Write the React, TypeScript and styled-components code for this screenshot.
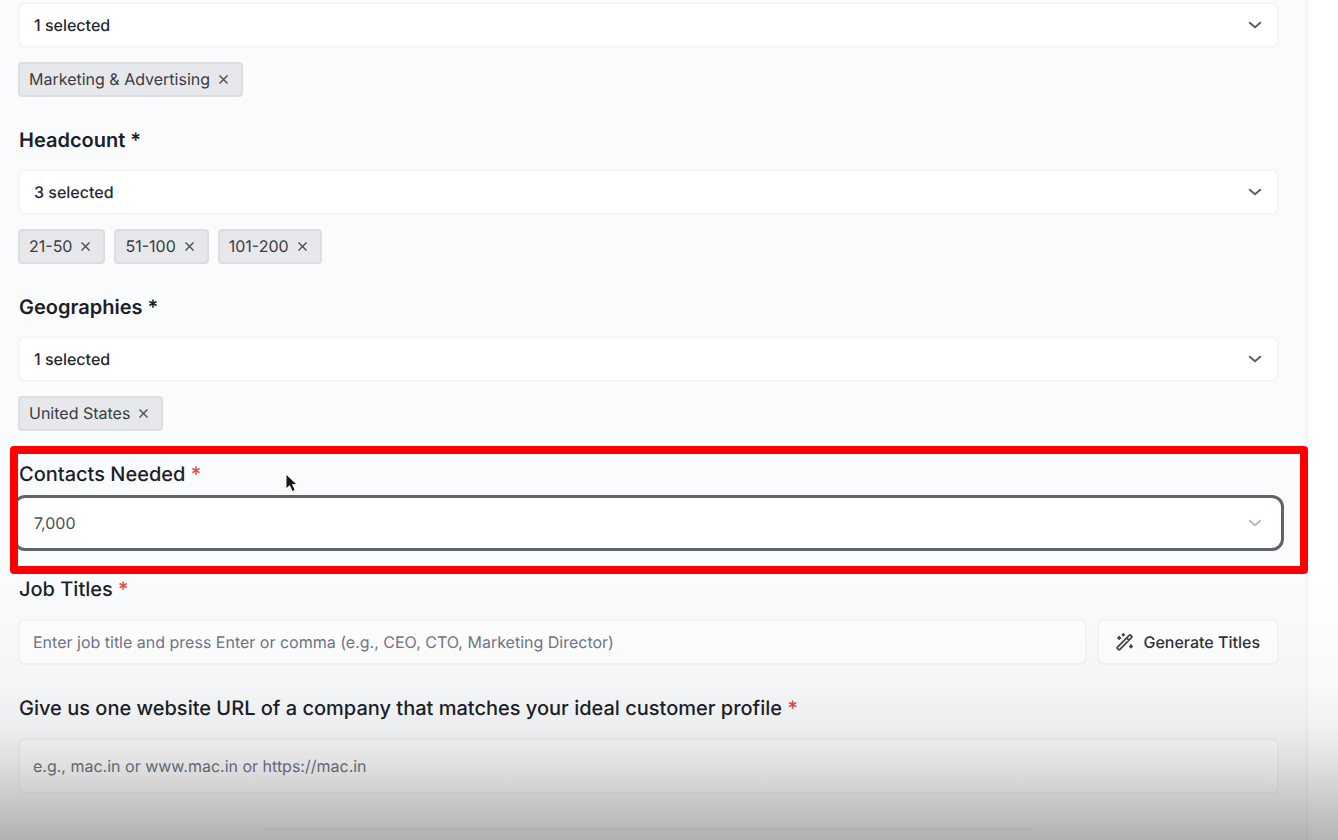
import React from "react";
import styled, { createGlobalStyle } from "styled-components";

const GlobalStyle = createGlobalStyle`
  *, *::before, *::after { box-sizing: border-box; }
  body {
    margin: 0;
    background: #ffffff;
    font-family: Inter, "Liberation Sans", sans-serif;
    text-rendering: geometricPrecision;
    color: #1b1f2a;
  }
  button, input, select { font: inherit; color: inherit; text-rendering: inherit; }
`;

const Page = styled.div`
  position: relative;
  min-height: 100vh;
  padding-right: 30px;
  display: flex;
  overflow: hidden;
`;

const Panel = styled.form`
  flex: 1;
  min-width: 0;
  padding: 2px 27px 0 18px;
  background: #fafbfd;
  border-right: 2px solid #f2f4f7;
  display: flex;
  flex-direction: column;
  gap: 29px;
`;

const Group = styled.section<{ $gap?: number }>`
  position: relative;
  display: flex;
  flex-direction: column;
  gap: ${(p) => p.$gap ?? 15}px;
`;

const Label = styled.label<{ $strong?: boolean }>`
  align-self: flex-start;
  padding-left: 1px;
  font-size: 20px;
  line-height: 28px;
  font-weight: ${(p) => (p.$strong ? 600 : 500)};
`;

const Required = styled.span`
  color: #ef4444;
`;

const Picker = styled.div`
  display: flex;
  flex-direction: column;
  gap: 14px;
`;

const SelectWrap = styled.div<{ $muted?: boolean }>`
  position: relative;
  color: ${(p) => (p.$muted ? "#4d4f55" : "#26282e")};
`;

const Select = styled.select<{ $focused?: boolean }>`
  display: block;
  width: 100%;
  height: 46px;
  padding: 0 48px 0 14px;
  appearance: none;
  background: #ffffff;
  border: 2px solid ${(p) => (p.$focused ? "#fcfdfe" : "#f3f5f8")};
  border-radius: 7px;
  font-size: 16px;
  font-weight: ${(p) => (p.$focused ? 400 : 500)};
  outline: ${(p) => (p.$focused ? "3px solid #5f646c" : "none")};
  outline-offset: 2px;
  box-shadow: ${(p) => (p.$focused ? "0 0 0 2px #ffffff" : "none")};
`;

const Chevron = styled.svg<{ $faint?: boolean }>`
  position: absolute;
  right: 15px;
  top: 50%;
  width: 18px;
  height: 18px;
  margin-top: -9px;
  pointer-events: none;
  fill: none;
  stroke: ${(p) => (p.$faint ? "#b9babd" : "#5c5e62")};
  stroke-width: 2.6;
  stroke-linecap: round;
  stroke-linejoin: round;
`;

const Tags = styled.ul`
  margin: 0;
  padding: 0;
  list-style: none;
  display: flex;
  flex-wrap: wrap;
  gap: 9px;
`;

const Tag = styled.li`
  height: 35px;
  padding: 0 12px 1px 9px;
  display: flex;
  align-items: center;
  gap: 8px;
  background: #e7e8eb;
  border: 2px solid #dcdee1;
  border-radius: 4px;
  color: #3a3c42;
  font-size: 16px;
  line-height: 24px;
`;

const RemoveButton = styled.button`
  padding: 0;
  width: 11px;
  height: 16px;
  border: 0;
  background: none;
  display: flex;
  align-items: center;
  justify-content: center;
`;

const Highlight = styled.div`
  position: absolute;
  inset: -14px -29px -28px -8px;
  border: 8px solid #ff0000;
  border-radius: 4px;
  pointer-events: none;
`;

const Pointer = styled.svg`
  position: absolute;
  left: 266px;
  top: 12px;
  width: 16px;
  height: 24px;
  pointer-events: none;
`;

const Row = styled.div`
  display: flex;
  gap: 10px;
`;

const TextInput = styled.input<{ $tall?: boolean }>`
  flex: 1 0 auto;
  min-width: 0;
  height: ${(p) => (p.$tall ? 56 : 46)}px;
  padding: 0 13px;
  background: #ffffff;
  border: 2px solid #f3f5f8;
  border-radius: 7px;
  font-size: 16px;
  outline: none;
  &::placeholder {
    color: #6f7687;
    opacity: 1;
  }
`;

const GenerateButton = styled.button`
  height: 46px;
  padding: 0 17px;
  display: flex;
  align-items: center;
  gap: 9px;
  background: #ffffff;
  border: 2px solid #f3f5f8;
  border-radius: 7px;
  color: #303238;
  font-size: 16px;
  font-weight: 500;
  white-space: nowrap;
`;

const NextCardEdge = styled.hr`
  width: 100%;
  max-width: 768px;
  height: 3px;
  margin: 5px auto 0;
  border: 0;
  background: #f0f2f6;
`;

const BottomShade = styled.div`
  position: absolute;
  inset: auto 0 0 0;
  height: 260px;
  pointer-events: none;
  background: linear-gradient(
    to bottom,
    rgba(0, 0, 0, 0) 0%,
    rgba(0, 0, 0, 0.022) 40%,
    rgba(0, 0, 0, 0.055) 56%,
    rgba(0, 0, 0, 0.11) 69%,
    rgba(0, 0, 0, 0.18) 81%,
    rgba(0, 0, 0, 0.24) 91%,
    rgba(0, 0, 0, 0.29) 100%
  );
`;

function SelectField(props: { id: string; value: string; focused?: boolean; label?: string }) {
  return (
    <SelectWrap $muted={props.focused}>
      <Select id={props.id} $focused={props.focused} aria-label={props.label} defaultValue={props.value}>
        <option>{props.value}</option>
      </Select>
      <Chevron viewBox="0 0 24 24" $faint={props.focused} aria-hidden="true">
        <path d="m5 9 7 6 7-6" />
      </Chevron>
    </SelectWrap>
  );
}

function PickerField(props: { id: string; value: string; tags: string[]; label?: string }) {
  return (
    <Picker>
      <SelectField id={props.id} value={props.value} label={props.label} />
      <Tags>
        {props.tags.map((tag) => (
          <Tag key={tag}>
            {tag}
            <RemoveButton type="button" aria-label={`Remove ${tag}`}>
              <svg width="11" height="11" viewBox="0 0 11 11" aria-hidden="true">
                <path d="M1.5 1.5 9.5 9.5M9.5 1.5 1.5 9.5" stroke="#4b4d53" strokeWidth="1.4" fill="none" />
              </svg>
            </RemoveButton>
          </Tag>
        ))}
      </Tags>
    </Picker>
  );
}

function WandIcon() {
  return (
    <svg width="18" height="18" viewBox="0 0 18 18" aria-hidden="true" fill="none" stroke="#45474c">
      <path
        d="M1.5 14.2 13.2 2.3c.5-.5 1.1-.5 1.6 0l.7.7c.5.5.5 1.1 0 1.6L3.9 16.3c-.5.5-1.1.5-1.6 0l-.8-.7c-.4-.5-.4-1 0-1.4ZM10.7 4.9l2.4 2.4"
        strokeWidth="1.8"
        strokeLinejoin="round"
      />
      <path d="M3.2 3.8v2.2M2.1 4.9h2.2M15 12.3v2.2M13.9 13.4h2.2M7.3 1.1v1.4M6.6 1.8h1.4" strokeWidth="2" strokeLinecap="round" />
    </svg>
  );
}

export default function App() {
  return (
    <>
      <GlobalStyle />
      <Page>
        <Panel onSubmit={(e: React.FormEvent) => e.preventDefault()}>
          <PickerField id="industry" label="Industry" value="1 selected" tags={["Marketing & Advertising"]} />

          <Group>
            <Label htmlFor="headcount" $strong>Headcount *</Label>
            <PickerField id="headcount" value="3 selected" tags={["21-50", "51-100", "101-200"]} />
          </Group>

          <Group>
            <Label htmlFor="geographies" $strong>Geographies *</Label>
            <PickerField id="geographies" value="1 selected" tags={["United States"]} />
          </Group>

          <Group $gap={12}>
            <Label htmlFor="contacts">
              Contacts Needed <Required>*</Required>
            </Label>
            <SelectField id="contacts" value="7,000" focused />
            <Pointer viewBox="0 0 16 24" aria-hidden="true">
              <path
                d="M2 2v15l3.6-3.2 2.7 5.8 3-1.4-2.7-5.6h4.6Z"
                fill="#15161a"
                stroke="#ffffff"
                strokeWidth="1"
                strokeLinejoin="round"
              />
            </Pointer>
            <Highlight />
          </Group>

          <Group $gap={16}>
            <Label htmlFor="titles">
              Job Titles <Required>*</Required>
            </Label>
            <Row>
              <TextInput
                id="titles"
                type="text"
                placeholder="Enter job title and press Enter or comma (e.g., CEO, CTO, Marketing Director)"
              />
              <GenerateButton type="button">
                <WandIcon />
                Generate Titles
              </GenerateButton>
            </Row>
          </Group>

          <Group $gap={16}>
            <Label htmlFor="website">
              Give us one website URL of a company that matches your ideal customer profile <Required>*</Required>
            </Label>
            <TextInput id="website" type="text" $tall placeholder="e.g., mac.in or www.mac.in or https://mac.in" />
          </Group>

          <NextCardEdge />
        </Panel>
        <BottomShade />
      </Page>
    </>
  );
}
